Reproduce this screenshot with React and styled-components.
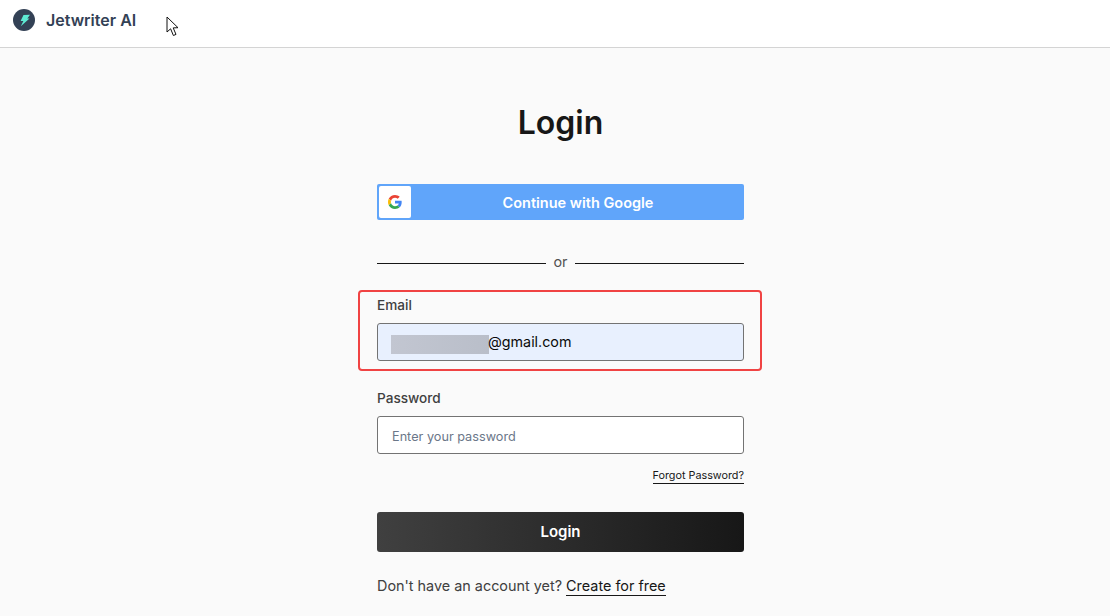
import React from "react";
import styled, { createGlobalStyle } from "styled-components";

const GlobalStyle = createGlobalStyle`
  html, body {
    margin: 0;
    padding: 0;
    background: #fafafa;
    font-family: Inter, "Liberation Sans", sans-serif;
    overflow: hidden;
  }
  * {
    box-sizing: border-box;
  }
`;

const Page = styled.div`
  width: 1110px;
  height: 616px;
  overflow: hidden;
  position: relative;
`;

const TopBar = styled.header`
  height: 48px;
  background: #ffffff;
  border-bottom: 1px solid #d4d4d4;
  display: flex;
  align-items: flex-start;
  padding: 9px 0 0 13px;
  gap: 11px;
`;

const Brand = styled.span`
  font-size: 16px;
  line-height: 22px;
  font-weight: 600;
  color: #334155;
`;

const Pointer = styled.svg`
  position: absolute;
  left: 166px;
  top: 16px;
`;

const Main = styled.main`
  width: 367px;
  margin-left: 377px;
  display: flex;
  flex-direction: column;
  padding-top: 54px;
`;

const Title = styled.h1`
  margin: 0 0 40px;
  font-size: 32px;
  line-height: 42px;
  font-weight: 600;
  color: #171717;
  text-align: center;
`;

const GoogleButton = styled.button`
  height: 36px;
  padding: 2px;
  border: 0;
  border-radius: 2px;
  background: #60a5fa;
  color: #ffffff;
  display: flex;
  align-items: center;
  font-family: inherit;
  font-size: 14.5px;
  font-weight: 600;
`;

const GoogleIcon = styled.span`
  width: 32px;
  height: 32px;
  background: #ffffff;
  border-radius: 2px;
  display: flex;
  align-items: center;
  justify-content: center;
`;

const GoogleLabel = styled.span`
  flex: 1;
  padding-left: 3px;
  text-align: center;
`;

const Divider = styled.div`
  margin-top: 33px;
  height: 20px;
  display: flex;
  align-items: center;
  gap: 7px;
  color: #525252;
  &::before,
  &::after {
    content: "";
    flex: 1;
    height: 1px;
    background: #171717;
  }
`;

const DividerText = styled.span`
  font-size: 14.4px;
  line-height: 18px;
  margin-bottom: 2px;
`;

const Field = styled.div`
  position: relative;
  display: flex;
  flex-direction: column;
  margin-top: ${(p) => p.$top}px;
`;

const Highlight = styled.div`
  position: absolute;
  left: -19px;
  right: -18px;
  top: -5px;
  bottom: -10px;
  border: 2px solid #f04343;
  border-radius: 4px;
  pointer-events: none;
`;

const Label = styled.label`
  font-size: 13.6px;
  line-height: 20px;
  font-weight: 500;
  color: #404040;
  margin-bottom: 8px;
`;

const FilledInput = styled.div`
  height: 38px;
  border: 1px solid #737373;
  border-radius: 3px;
  background: #e8f0fe;
  display: flex;
  align-items: center;
  padding: 0 0 2px 13px;
  font-size: 14.3px;
  color: #0a0a0a;
`;

const Redacted = styled.span`
  width: 98px;
  height: 19px;
  margin: 6px -1px 0 0;
  background: linear-gradient(90deg, #c2c6d1 0%, #b9bec9 100%);
`;

const TextInput = styled.input`
  height: 38px;
  border: 1px solid #737373;
  border-radius: 3px;
  background: #ffffff;
  padding: 2px 14px 0;
  font-family: inherit;
  font-size: 12.7px;
  outline: none;
  &::placeholder {
    color: #6b7789;
    opacity: 1;
  }
`;

const Forgot = styled.a`
  align-self: flex-end;
  margin-top: 15px;
  font-size: 10.8px;
  line-height: 14px;
  font-weight: 400;
  color: #171717;
  border-bottom: 1px solid #171717;
`;

const LoginButton = styled.button`
  margin-top: 28px;
  height: 40px;
  padding: 0 0 2px;
  border: 0;
  border-radius: 3px;
  background: linear-gradient(90deg, #404040 0%, #171717 100%);
  color: #ffffff;
  font-family: inherit;
  font-size: 15px;
  font-weight: 600;
`;

const Footer = styled.p`
  margin: 24px 0 0;
  font-size: 14.4px;
  line-height: 20px;
  color: #404040;
`;

const FooterLink = styled.a`
  color: #171717;
  border-bottom: 1px solid #171717;
  padding-bottom: 1px;
`;

const Logo = () => (
  <svg width="22" height="22" viewBox="0 0 22 22">
    <circle cx="11" cy="11" r="11" fill="#334155" />
    <path d="M10.500 6 L17 5.800 L14.300 9.600 L16.500 9.600 L7.800 17.200 L10.400 12.100 L7.600 12.100 Z" fill="#5eead4" />
  </svg>
);

const Google = () => (
  <svg width="14" height="14" viewBox="0 0 48 48">
    <path fill="#EA4335" d="M24 9.5c3.5 0 6.700 1.200 9.200 3.600l6.900-6.900C35.900 2.400 30.500 0 24 0 14.600 0 6.500 5.400 2.600 13.200l8 6.200C12.500 13.700 17.800 9.500 24 9.500z" />
    <path fill="#4285F4" d="M46.900 24.500c0-1.600-.1-3.100-.4-4.500H24v9h12.900c-.6 3-2.200 5.500-4.800 7.200l7.700 6c4.500-4.200 7.100-10.300 7.100-17.700z" />
    <path fill="#FBBC05" d="M10.500 28.600c-.5-1.400-.8-3-.8-4.600s.3-3.200.8-4.600l-8-6.200C.9 16.500 0 20.100 0 24s.9 7.500 2.600 10.800l7.900-6.200z" />
    <path fill="#34A853" d="M24 48c6.500 0 11.900-2.100 15.900-5.800l-7.700-6c-2.200 1.400-4.900 2.300-8.200 2.300-6.200 0-11.500-4.200-13.400-9.900l-8 6.200C6.500 42.600 14.600 48 24 48z" />
  </svg>
);

const App = () => {
  return (
    <Page>
      <GlobalStyle />
      <TopBar>
        <Logo />
        <Brand>Jetwriter AI</Brand>
      </TopBar>
      <Pointer width="14" height="21" viewBox="0 0 14 21">
        <path
          d="M1 1 L1 16 L4.600 12.800 L7.400 19.500 L10 18.400 L7.200 11.900 L12 11.700 Z"
          fill="#ffffff"
          stroke="#111111"
          strokeWidth="1"
        />
      </Pointer>
      <Main>
        <Title>Login</Title>
        <GoogleButton>
          <GoogleIcon>
            <Google />
          </GoogleIcon>
          <GoogleLabel>Continue with Google</GoogleLabel>
        </GoogleButton>
        <Divider>
          <DividerText>or</DividerText>
        </Divider>
        <Field $top={22}>
          <Highlight />
          <Label>Email</Label>
          <FilledInput>
            <Redacted />
            @gmail.com
          </FilledInput>
        </Field>
        <Field $top={27}>
          <Label>Password</Label>
          <TextInput type="password" placeholder="Enter your password" />
        </Field>
        <Forgot>Forgot Password?</Forgot>
        <LoginButton>Login</LoginButton>
        <Footer>
          Don't have an account yet? <FooterLink>Create for free</FooterLink>
        </Footer>
      </Main>
    </Page>
  );
};

export default App;
